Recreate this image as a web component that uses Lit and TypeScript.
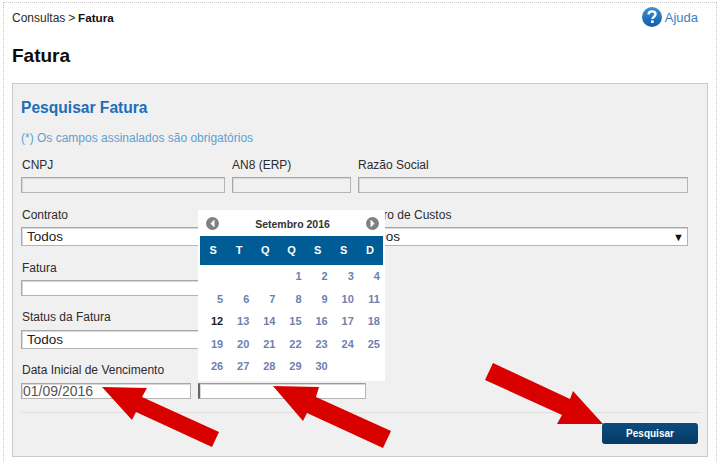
import { LitElement, html, css, svg } from "lit";
import { customElement } from "lit/decorators.js";

const WEEK = ["S", "T", "Q", "Q", "S", "S", "D"];
const DAYS: (number | null)[] = [null, null, null, 1, 2, 3, 4];
for (let d = 5; d <= 30; d++) DAYS.push(d);

const ARROWS = [
  "102,387 147,388 142,397 219,432 212,447 136,412 132,420",
  "273,386 319,387 316,397 391,431 383,448 307,413 303,421",
  "493,363 570,399 573,391 603,424 557,424 562,415 485,380",
];

@customElement("app-root")
export class AppRoot extends LitElement {
  static styles = css`
    :host {
      display: block;
      position: relative;
      width: 720px;
      height: 462px;
      overflow: hidden;
      background: #fff;
      font-family: "Liberation Sans", Arial, sans-serif;
      font-size: 12px;
      color: #222;
    }
    .frame {
      box-sizing: border-box;
      width: 714px;
      height: 470px;
      margin: 2px 0 0 3px;
      border: 1px dotted #c8c8c8;
      padding: 0 8px;
    }
    .top {
      display: flex;
      justify-content: space-between;
      height: 27px;
    }
    .crumb {
      line-height: 16px;
      margin-top: 7px;
      color: #2a2a2a;
      word-spacing: -0.5px;
    }
    .crumb b { color: #111; font-size: 11.7px; }
    .help {
      display: flex;
      align-items: center;
      gap: 3px;
      height: 20px;
      margin: 4px 10px 0 0;
      color: #3f7fc6;
      font-size: 13px;
    }
    .help svg { display: block; }
    .title {
      margin: 14px 0 0;
      font-size: 19px;
      line-height: 24px;
      font-weight: bold;
      color: #0c0c0c;
    }
    .panel {
      box-sizing: border-box;
      width: 696px;
      height: 374px;
      margin-top: 15px;
      border: 1px solid #c9c9c9;
      background: #f0f0f0;
      padding: 14px 8px 0 8px;
    }
    .heading {
      font-size: 15.6px;
      line-height: 20px;
      font-weight: bold;
      color: #1b6fb8;
    }
    .note {
      margin-top: 12px;
      line-height: 16px;
      color: #5fa0cf;
    }
    .row { display: grid; column-gap: 7px; }
    .r1 { grid-template-columns: 204px 119px 330px; margin-top: 10px; }
    .r2 { grid-template-columns: 330px 330px; margin-top: 13px; }
    .r3 { grid-template-columns: 330px; margin-top: 13px; }
    .r4 { grid-template-columns: 330px; margin-top: 12px; }
    .r5 { grid-template-columns: 170px 168px; margin-top: 12px; }
    label {
      display: block;
      min-height: 16px;
      padding-top: 1px;
      line-height: 16px;
      color: #2c2c2c;
      white-space: nowrap;
    }
    .row > div:first-child label { padding-left: 1px; }
    .box {
      box-sizing: border-box;
      display: flex;
      align-items: center;
      justify-content: space-between;
      margin-top: 4px;
      background: #fff;
      border: 1px solid #b4b4b4;
      border-top-color: #a8a8a8;
      border-left-color: #a8a8a8;
      box-shadow: inset 1px 1px 0 #d8d8d8;
    }
    .input { height: 16px; }
    .off { background: #f0f0f0; }
    .select {
      height: 19px;
      padding: 0 3px 0 5px;
      font-size: 13.5px;
      color: #222;
    }
    .wide { margin-top: 5px; }
    .caret { font-size: 11px; color: #111; }
    .date {
      margin-top: 5px;
      padding-left: 1px;
      font-size: 14px;
      color: #555;
    }
    .focus { border-left: 2px solid #666; border-top-color: #999; }
    .rule {
      width: 680px;
      margin-top: 13px;
      border-top: 1px solid #dedede;
    }
    .actions {
      display: flex;
      justify-content: flex-end;
      margin-top: 10px;
      width: 677px;
    }
    .btn {
      box-sizing: border-box;
      width: 96px;
      height: 21px;
      border-radius: 3px;
      background: linear-gradient(#0a4d80, #073a63);
      color: #fff;
      font-size: 10px;
      font-weight: bold;
      line-height: 21px;
      text-align: center;
    }
    .cal {
      position: absolute;
      left: 198px;
      top: 210px;
      box-sizing: border-box;
      width: 187px;
      height: 171px;
      padding: 0 2px;
      background: #fff;
    }
    .cal-head {
      display: flex;
      align-items: center;
      justify-content: space-between;
      height: 26px;
      padding: 1px 4px 0 6px;
      box-sizing: border-box;
      font-size: 10.5px;
      font-weight: bold;
      color: #333;
    }
    .cal-head svg { display: block; }
    .week, .days {
      display: grid;
      grid-template-columns: repeat(7, 1fr);
    }
    .week {
      height: 29px;
      background: #005c94;
      color: #fff;
      font-size: 11px;
      font-weight: bold;
      line-height: 29px;
      text-align: center;
    }
    .days {
      grid-auto-rows: 22.5px;
      font-size: 11px;
      font-weight: bold;
      line-height: 22.5px;
      text-align: right;
      color: #6f7fb0;
    }
    .days span { padding-right: 3px; }
    .days .today { color: #222; }
    .arrows {
      position: absolute;
      inset: 0;
      pointer-events: none;
    }
  `;

  private nav(back: boolean) {
    return html`<svg width="13" height="13" viewBox="0 0 13 13">
      <circle cx="6.5" cy="6.5" r="6.5" fill="#808080"></circle>
      <path d=${back ? "M8 3.4 5 6.5l3 3.1z" : "M5 3.4l3 3.1-3 3.1z"} fill="#fff" stroke="#fff" stroke-width="1"></path>
    </svg>`;
  }

  render() {
    return html`
      <div class="frame">
        <div class="top">
          <div class="crumb">Consultas &gt; <b>Fatura</b></div>
          <div class="help">
            <svg width="20" height="20" viewBox="0 0 20 20">
              <defs>
                <linearGradient id="h" x1="0" y1="0" x2="0" y2="1">
                  <stop offset="0" stop-color="#3b8fd6"></stop>
                  <stop offset="1" stop-color="#0f5ea8"></stop>
                </linearGradient>
              </defs>
              <circle cx="10" cy="10" r="10" fill="url(#h)"></circle>
              <path d="M6.6 7.6c0-2 1.5-3.2 3.5-3.2s3.4 1.1 3.4 2.9c0 2.5-3 2.6-3 4.7" fill="none" stroke="#fff" stroke-width="2.4"></path>
              <rect x="9.1" y="13.4" width="2.6" height="2.6" fill="#fff"></rect>
            </svg>
            <span>Ajuda</span>
          </div>
        </div>
        <h1 class="title">Fatura</h1>
        <div class="panel">
          <div class="heading">Pesquisar Fatura</div>
          <div class="note">(*) Os campos assinalados são obrigatórios</div>
          <div class="row r1">
            <div><label>CNPJ</label><div class="box input off"></div></div>
            <div><label>AN8 (ERP)</label><div class="box input off"></div></div>
            <div><label>Razão Social</label><div class="box input off"></div></div>
          </div>
          <div class="row r2">
            <div><label>Contrato</label><div class="box select"><span>Todos</span></div></div>
            <div><label>Centro de Custos</label><div class="box select"><span>Todos</span><span class="caret">▼</span></div></div>
          </div>
          <div class="row r3">
            <div><label>Fatura</label><div class="box input"></div></div>
          </div>
          <div class="row r4">
            <div><label>Status da Fatura</label><div class="box select wide"><span>Todos</span></div></div>
          </div>
          <div class="row r5">
            <div><label>Data Inicial de Vencimento</label><div class="box input date">01/09/2016</div></div>
            <div><label></label><div class="box input date focus"></div></div>
          </div>
          <div class="rule"></div>
          <div class="actions"><div class="btn">Pesquisar</div></div>
        </div>
      </div>
      <div class="cal">
        <div class="cal-head">
          ${this.nav(true)}<span>Setembro 2016</span>${this.nav(false)}
        </div>
        <div class="week">${WEEK.map((w) => html`<span>${w}</span>`)}</div>
        <div class="days">
          ${DAYS.map((d) => html`<span class=${d === 12 ? "today" : ""}>${d ?? ""}</span>`)}
        </div>
      </div>
      <svg class="arrows" width="720" height="462" viewBox="0 0 720 462">
        ${ARROWS.map((p) => svg`<polygon points=${p} fill="#d90000"></polygon>`)}
      </svg>
    `;
  }
}
